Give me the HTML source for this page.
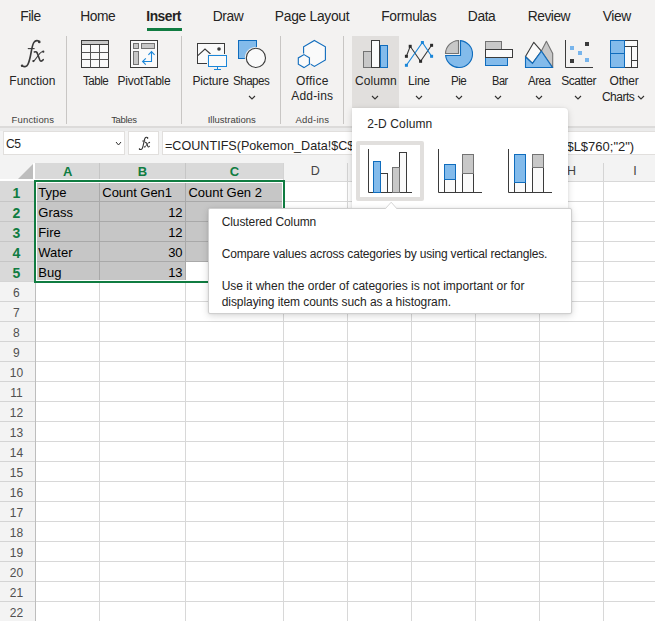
<!DOCTYPE html>
<html><head><meta charset="utf-8"><style>
html,body{margin:0;padding:0;}
body{width:655px;height:621px;overflow:hidden;position:relative;background:#fff;font-family:"Liberation Sans",sans-serif;}
body>div,body>svg{position:absolute;}
.t{white-space:nowrap;}
</style></head><body>
<div style="left:0px;top:0px;width:655px;height:126px;background:#f3f2f1;"></div>
<div style="left:0px;top:126px;width:655px;height:2px;background:#dcdbda;"></div>
<div style="left:0px;top:128px;width:655px;height:3px;background:#ebebeb;"></div>
<div style="left:0px;top:131px;width:655px;height:32px;background:#f3f3f3;"></div>
<div class="t" style="left:20.33px;top:9.52px;font-size:13.8px;line-height:13.8px;color:#252423;letter-spacing:-0.500px;font-family:'Liberation Sans',sans-serif;">File</div>
<div class="t" style="left:80.20px;top:9.52px;font-size:13.8px;line-height:13.8px;color:#252423;letter-spacing:-0.468px;font-family:'Liberation Sans',sans-serif;">Home</div>
<div class="t" style="left:146.36px;top:9.52px;font-size:13.8px;line-height:13.8px;color:#252423;font-weight:bold;letter-spacing:-0.500px;font-family:'Liberation Sans',sans-serif;">Insert</div>
<div class="t" style="left:212.80px;top:9.52px;font-size:13.8px;line-height:13.8px;color:#252423;letter-spacing:-0.398px;font-family:'Liberation Sans',sans-serif;">Draw</div>
<div class="t" style="left:274.80px;top:9.52px;font-size:13.8px;line-height:13.8px;color:#252423;letter-spacing:-0.268px;font-family:'Liberation Sans',sans-serif;">Page Layout</div>
<div class="t" style="left:381.20px;top:9.52px;font-size:13.8px;line-height:13.8px;color:#252423;letter-spacing:-0.300px;font-family:'Liberation Sans',sans-serif;">Formulas</div>
<div class="t" style="left:467.80px;top:9.52px;font-size:13.8px;line-height:13.8px;color:#252423;letter-spacing:-0.381px;font-family:'Liberation Sans',sans-serif;">Data</div>
<div class="t" style="left:527.83px;top:9.52px;font-size:13.8px;line-height:13.8px;color:#252423;letter-spacing:-0.500px;font-family:'Liberation Sans',sans-serif;">Review</div>
<div class="t" style="left:602.80px;top:9.52px;font-size:13.8px;line-height:13.8px;color:#252423;letter-spacing:-0.418px;font-family:'Liberation Sans',sans-serif;">View</div>
<div style="left:147px;top:28px;width:35px;height:3px;background:#107c41;"></div>
<div style="left:66px;top:36px;width:1px;height:88px;background:#c8c6c4;"></div>
<div style="left:181px;top:36px;width:1px;height:88px;background:#c8c6c4;"></div>
<div style="left:280px;top:36px;width:1px;height:88px;background:#c8c6c4;"></div>
<div style="left:343px;top:36px;width:1px;height:88px;background:#c8c6c4;"></div>
<div style="left:352px;top:36px;width:47px;height:72px;background:#e1dfdd;"></div>
<div class="t" style="left:9.30px;top:74.84px;font-size:12px;line-height:12px;color:#252423;letter-spacing:0.025px;font-family:'Liberation Sans',sans-serif;">Function</div>
<div class="t" style="left:82.80px;top:74.84px;font-size:12px;line-height:12px;color:#252423;letter-spacing:-0.500px;font-family:'Liberation Sans',sans-serif;transform:scaleX(0.9667);transform-origin:0 0;">Table</div>
<div class="t" style="left:117.50px;top:74.84px;font-size:12px;line-height:12px;color:#252423;letter-spacing:-0.241px;font-family:'Liberation Sans',sans-serif;">PivotTable</div>
<div class="t" style="left:192.40px;top:74.84px;font-size:12px;line-height:12px;color:#252423;letter-spacing:-0.141px;font-family:'Liberation Sans',sans-serif;">Picture</div>
<div class="t" style="left:233.00px;top:74.84px;font-size:12px;line-height:12px;color:#252423;letter-spacing:-0.500px;font-family:'Liberation Sans',sans-serif;transform:scaleX(0.9634);transform-origin:0 0;">Shapes</div>
<div class="t" style="left:296.00px;top:74.84px;font-size:12px;line-height:12px;color:#252423;letter-spacing:0.255px;font-family:'Liberation Sans',sans-serif;">Office</div>
<div class="t" style="left:291.30px;top:90.34px;font-size:12px;line-height:12px;color:#252423;letter-spacing:0.169px;font-family:'Liberation Sans',sans-serif;">Add-ins</div>
<div class="t" style="left:355.00px;top:74.84px;font-size:12px;line-height:12px;color:#252423;letter-spacing:0.050px;font-family:'Liberation Sans',sans-serif;">Column</div>
<div class="t" style="left:408.00px;top:74.84px;font-size:12px;line-height:12px;color:#252423;letter-spacing:-0.229px;font-family:'Liberation Sans',sans-serif;">Line</div>
<div class="t" style="left:451.20px;top:74.84px;font-size:12px;line-height:12px;color:#252423;letter-spacing:-0.500px;font-family:'Liberation Sans',sans-serif;transform:scaleX(0.9667);transform-origin:0 0;">Pie</div>
<div class="t" style="left:491.50px;top:74.84px;font-size:12px;line-height:12px;color:#252423;letter-spacing:-0.500px;font-family:'Liberation Sans',sans-serif;transform:scaleX(0.9166);transform-origin:0 0;">Bar</div>
<div class="t" style="left:527.60px;top:74.84px;font-size:12px;line-height:12px;color:#252423;letter-spacing:-0.500px;font-family:'Liberation Sans',sans-serif;transform:scaleX(0.9561);transform-origin:0 0;">Area</div>
<div class="t" style="left:561.30px;top:74.84px;font-size:12px;line-height:12px;color:#252423;letter-spacing:-0.486px;font-family:'Liberation Sans',sans-serif;">Scatter</div>
<div class="t" style="left:609.60px;top:74.84px;font-size:12px;line-height:12px;color:#252423;letter-spacing:-0.228px;font-family:'Liberation Sans',sans-serif;">Other</div>
<div class="t" style="left:601.90px;top:90.84px;font-size:12px;line-height:12px;color:#252423;letter-spacing:-0.489px;font-family:'Liberation Sans',sans-serif;">Charts</div>
<div class="t" style="left:11.60px;top:115.26px;font-size:9.5px;line-height:9.5px;color:#424140;letter-spacing:0.152px;font-family:'Liberation Sans',sans-serif;">Functions</div>
<div class="t" style="left:111.20px;top:115.26px;font-size:9.5px;line-height:9.5px;color:#424140;letter-spacing:-0.332px;font-family:'Liberation Sans',sans-serif;">Tables</div>
<div class="t" style="left:207.70px;top:115.26px;font-size:9.5px;line-height:9.5px;color:#424140;font-family:'Liberation Sans',sans-serif;">Illustrations</div>
<div class="t" style="left:295.40px;top:115.26px;font-size:9.5px;line-height:9.5px;color:#424140;letter-spacing:0.232px;font-family:'Liberation Sans',sans-serif;">Add-ins</div>
<svg style="left:248.0px;top:95.0px" width="8" height="5"><polyline points="1,1 4.0,4 7,1" fill="none" stroke="#323130" stroke-width="1.1"/></svg>
<svg style="left:371.2px;top:95.0px" width="8" height="5"><polyline points="1,1 4.0,4 7,1" fill="none" stroke="#323130" stroke-width="1.1"/></svg>
<svg style="left:414.5px;top:95.0px" width="8" height="5"><polyline points="1,1 4.0,4 7,1" fill="none" stroke="#323130" stroke-width="1.1"/></svg>
<svg style="left:454.5px;top:95.0px" width="8" height="5"><polyline points="1,1 4.0,4 7,1" fill="none" stroke="#323130" stroke-width="1.1"/></svg>
<svg style="left:494.4px;top:95.0px" width="8" height="5"><polyline points="1,1 4.0,4 7,1" fill="none" stroke="#323130" stroke-width="1.1"/></svg>
<svg style="left:534.5px;top:95.0px" width="8" height="5"><polyline points="1,1 4.0,4 7,1" fill="none" stroke="#323130" stroke-width="1.1"/></svg>
<svg style="left:574.2px;top:95.0px" width="8" height="5"><polyline points="1,1 4.0,4 7,1" fill="none" stroke="#323130" stroke-width="1.1"/></svg>
<svg style="left:636.5px;top:94.5px" width="8" height="5"><polyline points="1,1 4.0,4 7,1" fill="none" stroke="#323130" stroke-width="1.1"/></svg>
<div style="left:3px;top:131px;width:122px;height:24px;background:#fff;box-sizing:border-box;border:1px solid #e1dfdd;"></div>
<div class="t" style="left:6.00px;top:138.42px;font-size:12.5px;line-height:12.5px;color:#252423;letter-spacing:-0.500px;font-family:'Liberation Sans',sans-serif;transform:scaleX(0.9691);transform-origin:0 0;">C5</div>
<svg style="left:114.9px;top:140.9px" width="7" height="5"><polyline points="1,1 3.5,4 6,1" fill="none" stroke="#323130" stroke-width="1"/></svg>
<div style="left:128px;top:131px;width:31px;height:24px;background:#fff;box-sizing:border-box;border:1px solid #e1dfdd;"></div>
<div style="left:162px;top:131px;width:493px;height:24px;background:#fff;box-sizing:border-box;border:1px solid #e1dfdd;border-right:none;"></div>
<div class="t" style="left:165.00px;top:139.83px;font-size:12.6px;line-height:12.6px;color:#252423;font-family:'Liberation Sans',sans-serif;">=COUNTIFS(Pokemon_Data!$C$2:$C$760;"Grass"</div>
<div class="t" style="left:440.67px;top:139.80px;font-size:13px;line-height:13px;color:#252423;font-family:'Liberation Sans',sans-serif;">Pokemon_Data!$L$2:$L$760;"2")</div>
<div style="left:0px;top:163px;width:655px;height:18px;background:#f3f3f3;"></div>
<svg style="left:0;top:163px" width="35" height="18"><polygon points="33,1 33,16 18,16" fill="#bdbdbd"/></svg>
<div style="left:35px;top:163px;width:248px;height:16px;background:#d9d9d9;"></div>
<div style="left:33px;top:163px;width:2px;height:18px;background:#ffffff;"></div>
<div style="left:0px;top:179px;width:283px;height:1px;background:#ffffff;"></div>
<div style="left:99px;top:163px;width:1px;height:16px;background:#c6c6c6;"></div>
<div style="left:185px;top:163px;width:1px;height:16px;background:#c6c6c6;"></div>
<div style="left:283px;top:163px;width:1px;height:18px;background:#d4d4d4;"></div>
<div style="left:347px;top:163px;width:1px;height:18px;background:#d4d4d4;"></div>
<div style="left:411px;top:163px;width:1px;height:18px;background:#d4d4d4;"></div>
<div style="left:475px;top:163px;width:1px;height:18px;background:#d4d4d4;"></div>
<div style="left:539px;top:163px;width:1px;height:18px;background:#d4d4d4;"></div>
<div style="left:603px;top:163px;width:1px;height:18px;background:#d4d4d4;"></div>
<div style="left:283px;top:181px;width:372px;height:1px;background:#c6c6c6;"></div>
<div style="left:0px;top:181px;width:35px;height:440px;background:#f3f3f3;"></div>
<div style="left:0px;top:180px;width:35px;height:1px;background:#ffffff;"></div>
<div style="left:0px;top:181px;width:34px;height:100px;background:#d9d9d9;"></div>
<div style="left:0px;top:201px;width:34px;height:1px;background:#c6c6c6;"></div>
<div style="left:0px;top:221px;width:34px;height:1px;background:#c6c6c6;"></div>
<div style="left:0px;top:241px;width:34px;height:1px;background:#c6c6c6;"></div>
<div style="left:0px;top:261px;width:34px;height:1px;background:#c6c6c6;"></div>
<div style="left:0px;top:281px;width:35px;height:1px;background:#d4d4d4;"></div>
<div style="left:0px;top:301px;width:35px;height:1px;background:#d4d4d4;"></div>
<div style="left:0px;top:321px;width:35px;height:1px;background:#d4d4d4;"></div>
<div style="left:0px;top:341px;width:35px;height:1px;background:#d4d4d4;"></div>
<div style="left:0px;top:361px;width:35px;height:1px;background:#d4d4d4;"></div>
<div style="left:0px;top:381px;width:35px;height:1px;background:#d4d4d4;"></div>
<div style="left:0px;top:401px;width:35px;height:1px;background:#d4d4d4;"></div>
<div style="left:0px;top:421px;width:35px;height:1px;background:#d4d4d4;"></div>
<div style="left:0px;top:441px;width:35px;height:1px;background:#d4d4d4;"></div>
<div style="left:0px;top:461px;width:35px;height:1px;background:#d4d4d4;"></div>
<div style="left:0px;top:481px;width:35px;height:1px;background:#d4d4d4;"></div>
<div style="left:0px;top:501px;width:35px;height:1px;background:#d4d4d4;"></div>
<div style="left:0px;top:521px;width:35px;height:1px;background:#d4d4d4;"></div>
<div style="left:0px;top:541px;width:35px;height:1px;background:#d4d4d4;"></div>
<div style="left:0px;top:561px;width:35px;height:1px;background:#d4d4d4;"></div>
<div style="left:0px;top:581px;width:35px;height:1px;background:#d4d4d4;"></div>
<div style="left:0px;top:601px;width:35px;height:1px;background:#d4d4d4;"></div>
<div style="left:0px;top:621px;width:35px;height:1px;background:#d4d4d4;"></div>
<div style="left:35px;top:181px;width:1px;height:440px;background:#bdbdbd;"></div>
<div style="left:36px;top:181px;width:619px;height:1px;background:#d8d8d8;"></div>
<div style="left:36px;top:201px;width:619px;height:1px;background:#d8d8d8;"></div>
<div style="left:36px;top:221px;width:619px;height:1px;background:#d8d8d8;"></div>
<div style="left:36px;top:241px;width:619px;height:1px;background:#d8d8d8;"></div>
<div style="left:36px;top:261px;width:619px;height:1px;background:#d8d8d8;"></div>
<div style="left:36px;top:281px;width:619px;height:1px;background:#d8d8d8;"></div>
<div style="left:36px;top:301px;width:619px;height:1px;background:#d8d8d8;"></div>
<div style="left:36px;top:321px;width:619px;height:1px;background:#d8d8d8;"></div>
<div style="left:36px;top:341px;width:619px;height:1px;background:#d8d8d8;"></div>
<div style="left:36px;top:361px;width:619px;height:1px;background:#d8d8d8;"></div>
<div style="left:36px;top:381px;width:619px;height:1px;background:#d8d8d8;"></div>
<div style="left:36px;top:401px;width:619px;height:1px;background:#d8d8d8;"></div>
<div style="left:36px;top:421px;width:619px;height:1px;background:#d8d8d8;"></div>
<div style="left:36px;top:441px;width:619px;height:1px;background:#d8d8d8;"></div>
<div style="left:36px;top:461px;width:619px;height:1px;background:#d8d8d8;"></div>
<div style="left:36px;top:481px;width:619px;height:1px;background:#d8d8d8;"></div>
<div style="left:36px;top:501px;width:619px;height:1px;background:#d8d8d8;"></div>
<div style="left:36px;top:521px;width:619px;height:1px;background:#d8d8d8;"></div>
<div style="left:36px;top:541px;width:619px;height:1px;background:#d8d8d8;"></div>
<div style="left:36px;top:561px;width:619px;height:1px;background:#d8d8d8;"></div>
<div style="left:36px;top:581px;width:619px;height:1px;background:#d8d8d8;"></div>
<div style="left:36px;top:601px;width:619px;height:1px;background:#d8d8d8;"></div>
<div style="left:36px;top:621px;width:619px;height:1px;background:#d8d8d8;"></div>
<div style="left:99px;top:182px;width:1px;height:439px;background:#d8d8d8;"></div>
<div style="left:185px;top:182px;width:1px;height:439px;background:#d8d8d8;"></div>
<div style="left:283px;top:182px;width:1px;height:439px;background:#d8d8d8;"></div>
<div style="left:347px;top:182px;width:1px;height:439px;background:#d8d8d8;"></div>
<div style="left:411px;top:182px;width:1px;height:439px;background:#d8d8d8;"></div>
<div style="left:475px;top:182px;width:1px;height:439px;background:#d8d8d8;"></div>
<div style="left:539px;top:182px;width:1px;height:439px;background:#d8d8d8;"></div>
<div style="left:603px;top:182px;width:1px;height:439px;background:#d8d8d8;"></div>
<div style="left:36px;top:182px;width:247px;height:99px;background:#c6c6c6;"></div>
<div style="left:186px;top:262px;width:97px;height:19px;background:#ffffff;"></div>
<div style="left:36px;top:201px;width:247px;height:1px;background:#a9a9a9;"></div>
<div style="left:36px;top:221px;width:247px;height:1px;background:#a9a9a9;"></div>
<div style="left:36px;top:241px;width:247px;height:1px;background:#a9a9a9;"></div>
<div style="left:36px;top:261px;width:150px;height:1px;background:#a9a9a9;"></div>
<div style="left:186px;top:261px;width:97px;height:1px;background:#a9a9a9;"></div>
<div style="left:99px;top:182px;width:1px;height:99px;background:#a9a9a9;"></div>
<div style="left:185px;top:182px;width:1px;height:99px;background:#a9a9a9;"></div>
<div style="left:34px;top:180px;width:251px;height:103px;background:transparent;box-sizing:border-box;border:2px solid #107c41;"></div>
<div style="left:36px;top:182px;width:247px;height:99px;background:transparent;box-sizing:border-box;border:1px solid #ffffff;"></div>
<div class="t" style="left:62.91px;top:165.00px;font-size:13px;line-height:13px;color:#107c41;font-weight:bold;font-family:'Liberation Sans',sans-serif;">A</div>
<div class="t" style="left:137.71px;top:165.00px;font-size:13px;line-height:13px;color:#107c41;font-weight:bold;font-family:'Liberation Sans',sans-serif;">B</div>
<div class="t" style="left:229.81px;top:165.00px;font-size:13px;line-height:13px;color:#107c41;font-weight:bold;font-family:'Liberation Sans',sans-serif;">C</div>
<div class="t" style="left:310.69px;top:165.42px;font-size:12.5px;line-height:12.5px;color:#444444;font-family:'Liberation Sans',sans-serif;">D</div>
<div class="t" style="left:374.83px;top:165.42px;font-size:12.5px;line-height:12.5px;color:#444444;font-family:'Liberation Sans',sans-serif;">E</div>
<div class="t" style="left:439.18px;top:165.42px;font-size:12.5px;line-height:12.5px;color:#444444;font-family:'Liberation Sans',sans-serif;">F</div>
<div class="t" style="left:502.14px;top:165.42px;font-size:12.5px;line-height:12.5px;color:#444444;font-family:'Liberation Sans',sans-serif;">G</div>
<div class="t" style="left:566.99px;top:165.42px;font-size:12.5px;line-height:12.5px;color:#444444;font-family:'Liberation Sans',sans-serif;">H</div>
<div class="t" style="left:633.26px;top:165.42px;font-size:12.5px;line-height:12.5px;color:#444444;font-family:'Liberation Sans',sans-serif;">I</div>
<div class="t" style="left:12.41px;top:185.65px;font-size:14px;line-height:14px;color:#107c41;font-weight:bold;font-family:'Liberation Sans',sans-serif;">1</div>
<div class="t" style="left:12.41px;top:205.65px;font-size:14px;line-height:14px;color:#107c41;font-weight:bold;font-family:'Liberation Sans',sans-serif;">2</div>
<div class="t" style="left:12.41px;top:225.65px;font-size:14px;line-height:14px;color:#107c41;font-weight:bold;font-family:'Liberation Sans',sans-serif;">3</div>
<div class="t" style="left:12.41px;top:245.65px;font-size:14px;line-height:14px;color:#107c41;font-weight:bold;font-family:'Liberation Sans',sans-serif;">4</div>
<div class="t" style="left:12.41px;top:265.65px;font-size:14px;line-height:14px;color:#107c41;font-weight:bold;font-family:'Liberation Sans',sans-serif;">5</div>
<div class="t" style="left:13.06px;top:286.84px;font-size:12px;line-height:12px;color:#505050;font-family:'Liberation Sans',sans-serif;">6</div>
<div class="t" style="left:13.06px;top:306.84px;font-size:12px;line-height:12px;color:#505050;font-family:'Liberation Sans',sans-serif;">7</div>
<div class="t" style="left:13.06px;top:326.84px;font-size:12px;line-height:12px;color:#505050;font-family:'Liberation Sans',sans-serif;">8</div>
<div class="t" style="left:13.06px;top:346.84px;font-size:12px;line-height:12px;color:#505050;font-family:'Liberation Sans',sans-serif;">9</div>
<div class="t" style="left:9.73px;top:366.84px;font-size:12px;line-height:12px;color:#505050;font-family:'Liberation Sans',sans-serif;">10</div>
<div class="t" style="left:10.17px;top:386.84px;font-size:12px;line-height:12px;color:#505050;font-family:'Liberation Sans',sans-serif;">11</div>
<div class="t" style="left:9.73px;top:406.84px;font-size:12px;line-height:12px;color:#505050;font-family:'Liberation Sans',sans-serif;">12</div>
<div class="t" style="left:9.73px;top:426.84px;font-size:12px;line-height:12px;color:#505050;font-family:'Liberation Sans',sans-serif;">13</div>
<div class="t" style="left:9.73px;top:446.84px;font-size:12px;line-height:12px;color:#505050;font-family:'Liberation Sans',sans-serif;">14</div>
<div class="t" style="left:9.73px;top:466.84px;font-size:12px;line-height:12px;color:#505050;font-family:'Liberation Sans',sans-serif;">15</div>
<div class="t" style="left:9.73px;top:486.84px;font-size:12px;line-height:12px;color:#505050;font-family:'Liberation Sans',sans-serif;">16</div>
<div class="t" style="left:9.73px;top:506.84px;font-size:12px;line-height:12px;color:#505050;font-family:'Liberation Sans',sans-serif;">17</div>
<div class="t" style="left:9.73px;top:526.84px;font-size:12px;line-height:12px;color:#505050;font-family:'Liberation Sans',sans-serif;">18</div>
<div class="t" style="left:9.73px;top:546.84px;font-size:12px;line-height:12px;color:#505050;font-family:'Liberation Sans',sans-serif;">19</div>
<div class="t" style="left:9.73px;top:566.84px;font-size:12px;line-height:12px;color:#505050;font-family:'Liberation Sans',sans-serif;">20</div>
<div class="t" style="left:9.73px;top:586.84px;font-size:12px;line-height:12px;color:#505050;font-family:'Liberation Sans',sans-serif;">21</div>
<div class="t" style="left:9.73px;top:606.84px;font-size:12px;line-height:12px;color:#505050;font-family:'Liberation Sans',sans-serif;">22</div>
<div class="t" style="left:38.30px;top:186.00px;font-size:13px;line-height:13px;color:#000000;font-family:'Liberation Sans',sans-serif;">Type</div>
<div class="t" style="left:102.30px;top:186.00px;font-size:13px;line-height:13px;color:#000000;letter-spacing:-0.045px;font-family:'Liberation Sans',sans-serif;">Count Gen1</div>
<div class="t" style="left:188.40px;top:186.00px;font-size:13px;line-height:13px;color:#000000;letter-spacing:-0.022px;font-family:'Liberation Sans',sans-serif;">Count Gen 2</div>
<div class="t" style="left:38.30px;top:206.00px;font-size:13px;line-height:13px;color:#000000;font-family:'Liberation Sans',sans-serif;">Grass</div>
<div class="t" style="left:168.14px;top:206.00px;font-size:13px;line-height:13px;color:#000000;font-family:'Liberation Sans',sans-serif;">12</div>
<div class="t" style="left:38.30px;top:226.00px;font-size:13px;line-height:13px;color:#000000;font-family:'Liberation Sans',sans-serif;">Fire</div>
<div class="t" style="left:168.14px;top:226.00px;font-size:13px;line-height:13px;color:#000000;font-family:'Liberation Sans',sans-serif;">12</div>
<div class="t" style="left:38.30px;top:246.00px;font-size:13px;line-height:13px;color:#000000;font-family:'Liberation Sans',sans-serif;">Water</div>
<div class="t" style="left:168.14px;top:246.00px;font-size:13px;line-height:13px;color:#000000;font-family:'Liberation Sans',sans-serif;">30</div>
<div class="t" style="left:38.30px;top:266.00px;font-size:13px;line-height:13px;color:#000000;font-family:'Liberation Sans',sans-serif;">Bug</div>
<div class="t" style="left:168.14px;top:266.00px;font-size:13px;line-height:13px;color:#000000;font-family:'Liberation Sans',sans-serif;">13</div>
<svg style="left:0;top:0" width="655" height="130"><rect x="81.5" y="40.5" width="27" height="27" fill="#fafafa" stroke="#3b3b3b"/><rect x="82" y="41" width="26" height="3" fill="#c8c8c8"/><path d="M81.5 44.5H108.5M90.5 44.5V67.5M99.5 44.5V67.5M81.5 52.5H108.5M81.5 59.5H108.5" stroke="#555" fill="none"/><path d="M81.5 44.5H108.5" stroke="#3b3b3b"/><rect x="130.5" y="40.5" width="27" height="27" fill="#fafafa" stroke="#3b3b3b"/><rect x="133.5" y="43.5" width="5" height="5" fill="#c8c8c8" stroke="#737373"/><rect x="141.5" y="43.5" width="13" height="5" fill="#c8c8c8" stroke="#737373"/><rect x="133.5" y="51.5" width="5" height="13" fill="#c8c8c8" stroke="#737373"/><path d="M151.5 52V61.5H142.8M148.4 54.8L151.5 51.6L154.6 54.8M145.8 58.3L142.6 61.5L145.8 64.6" stroke="#1a86d9" fill="none" stroke-width="1.1"/><rect x="197.5" y="43.5" width="27" height="20" fill="#fafafa" stroke="#3b3b3b"/><path d="M197.8 55.7L205 49L210.5 54" stroke="#3b3b3b" fill="none" stroke-width="1.1"/><circle cx="219" cy="49" r="1.8" fill="#3b3b3b"/><rect x="207" y="54" width="21" height="14" fill="#f3f2f1"/><rect x="208.5" y="55.5" width="18" height="11" fill="#fafafa" stroke="#1a86d9"/><path d="M217.5 66.5V69.5M214 69.5H221" stroke="#1a86d9" fill="none"/><rect x="238.5" y="40.5" width="18" height="18" fill="#83bbeb" stroke="#0f6cbd"/><circle cx="255.9" cy="57.9" r="11" fill="#f3f2f1"/><circle cx="255.9" cy="57.9" r="9.6" fill="#fafafa" stroke="#3b3b3b" stroke-width="1.1"/><path d="M314.4 40.5L325.4 46.7V59.9L314.4 66.4L303.6 59.9V46.7Z" fill="#fafafa" stroke="#0f6cbd" stroke-width="1.1"/><path d="M304 53.2L310.6 57.1V65L304 68.9L297.1 65V57.1Z" fill="#f3f2f1"/><path d="M304 54.6L309.4 57.9V64.3L304 67.6L298.3 64.3V57.9Z" fill="#fafafa" stroke="#0f6cbd" stroke-width="1.1"/><rect x="363.5" y="51.5" width="8" height="16" fill="#c8c8c8" stroke="#737373"/><rect x="380.5" y="45.5" width="7" height="22" fill="#83bbeb" stroke="#0f6cbd"/><rect x="371.5" y="40.5" width="8" height="27" fill="#fafafa" stroke="#3b3b3b"/><polyline points="406.4,56.3 410.2,46.3 420.6,61.3 431.6,45.3" fill="none" stroke="#3b3b3b" stroke-width="1.1"/><polyline points="406.4,65.3 422.4,42.5 431.6,56.3" fill="none" stroke="#1a86d9" stroke-width="1.1"/><rect x="404.9" y="54.8" width="3" height="3" fill="#2b2b2b"/><rect x="408.7" y="44.8" width="3" height="3" fill="#2b2b2b"/><rect x="419.1" y="59.8" width="3" height="3" fill="#2b2b2b"/><rect x="430.1" y="43.8" width="3" height="3" fill="#2b2b2b"/><rect x="404.9" y="63.8" width="3" height="3" fill="#1a86d9"/><rect x="420.9" y="41.0" width="3" height="3" fill="#1a86d9"/><rect x="430.1" y="54.8" width="3" height="3" fill="#1a86d9"/><path d="M460.5 55.5V40.6A13.5 13.5 0 1 1 445.6 55.5Z" fill="#83bbeb" stroke="#0f6cbd" stroke-width="1.1"/><path d="M458.5 53.5H445.5A13.5 13.5 0 0 1 458.5 40.5Z" fill="#c8c8c8" stroke="#737373" stroke-width="1.1"/><rect x="485.5" y="41.5" width="16" height="8" fill="#c8c8c8" stroke="#737373"/><rect x="485.5" y="57.5" width="22" height="8" fill="#83bbeb" stroke="#0f6cbd"/><rect x="485.5" y="49.5" width="27" height="8" fill="#fafafa" stroke="#3b3b3b"/><path d="M541.4 51.1L546.4 41.2L552.7 53.5V67.5Z" fill="#c8c8c8" stroke="#737373" stroke-width="1.1" stroke-linejoin="round"/><path d="M525.5 56.5L533.8 42.3L541.4 51.1L532.5 63.4Z" fill="#fafafa" stroke="#3b3b3b" stroke-width="1.1" stroke-linejoin="round"/><path d="M525.5 57L532.5 63.4L541.4 51.1L552.4 67.5H525.5Z" fill="#83bbeb" stroke="#0f6cbd" stroke-width="1.1"/><path d="M565.5 40V67.5H593" fill="none" stroke="#3b3b3b"/><rect x="585" y="42" width="4" height="4" fill="#3b3b3b"/><rect x="570" y="46" width="4" height="4" fill="#78b5ec"/><rect x="578" y="51" width="4" height="4" fill="#78b5ec"/><rect x="570" y="59" width="4" height="4" fill="#3b3b3b"/><rect x="585" y="58" width="4" height="4" fill="#78b5ec"/><rect x="624.5" y="40.5" width="13" height="27" fill="#fafafa" stroke="#3b3b3b"/><path d="M624.5 46.5H637.5M631.5 46.5V67.5M631.5 60.5H637.5" fill="none" stroke="#3b3b3b"/><rect x="610.5" y="40.5" width="14" height="27" fill="#83bbeb" stroke="#0f6cbd"/><path d="M610.5 53.5H624.5" fill="none" stroke="#0f6cbd"/></svg>
<svg style="left:0;top:0" width="200" height="160"><g transform="translate(21 40) scale(1)"><path d="M18.2 1.9C17.5 0.2 14.5 0.1 12.9 2.4C11.6 4.3 10.9 8 10.1 12.5C9.2 17.5 8.4 21.5 6.9 24.4C5.7 26.6 3.6 27.4 1.2 25.9" fill="none" stroke="#3a3a3a" stroke-width="1.6" stroke-linecap="round"/><path d="M6.8 8.6H13.6" fill="none" stroke="#3a3a3a" stroke-width="1.1"/><path d="M13.3 12C15 11.2 16 12 16.8 14.5L18.8 20C19.4 21.5 20.6 21.6 22.2 19.7" fill="none" stroke="#3a3a3a" stroke-width="1.6" stroke-linecap="round"/><path d="M22.4 11.6C21 11.2 19.6 12.4 17.6 15L14.6 19C13.9 20 13.1 21 12.3 21.1" fill="none" stroke="#3a3a3a" stroke-width="1.1" stroke-linecap="round"/><circle cx="18.3" cy="1.9" r="1.3" fill="#3a3a3a"/><circle cx="1.1" cy="25.7" r="1.3" fill="#3a3a3a"/><circle cx="22.3" cy="11.7" r="1.105" fill="#3a3a3a"/><circle cx="12.4" cy="21.1" r="1.105" fill="#3a3a3a"/></g></svg>
<svg style="left:0;top:0" width="200" height="160"><g transform="translate(139 137) scale(0.47)"><path d="M18.2 1.9C17.5 0.2 14.5 0.1 12.9 2.4C11.6 4.3 10.9 8 10.1 12.5C9.2 17.5 8.4 21.5 6.9 24.4C5.7 26.6 3.6 27.4 1.2 25.9" fill="none" stroke="#333" stroke-width="2.3" stroke-linecap="round"/><path d="M6.8 8.6H13.6" fill="none" stroke="#333" stroke-width="1.9"/><path d="M13.3 12C15 11.2 16 12 16.8 14.5L18.8 20C19.4 21.5 20.6 21.6 22.2 19.7" fill="none" stroke="#333" stroke-width="2.3" stroke-linecap="round"/><path d="M22.4 11.6C21 11.2 19.6 12.4 17.6 15L14.6 19C13.9 20 13.1 21 12.3 21.1" fill="none" stroke="#333" stroke-width="1.9" stroke-linecap="round"/><circle cx="18.3" cy="1.9" r="1.6" fill="#333"/><circle cx="1.1" cy="25.7" r="1.6" fill="#333"/><circle cx="22.3" cy="11.7" r="1.36" fill="#333"/><circle cx="12.4" cy="21.1" r="1.36" fill="#333"/></g></svg>
<div style="left:352px;top:108px;width:216px;height:101px;background:#fff;border-radius:0 4px 0 0;box-shadow:0 2px 7px rgba(0,0,0,0.15),0 0 2px rgba(0,0,0,0.08);"></div>
<div class="t" style="left:367.20px;top:118.04px;font-size:12px;line-height:12px;color:#252423;letter-spacing:0.120px;font-family:'Liberation Sans',sans-serif;">2-D Column</div>
<div style="left:356px;top:141px;width:68px;height:60px;box-sizing:border-box;border:4px solid #e1dfdd;border-radius:2px;"></div>
<svg style="left:0;top:0" width="655" height="210"><path d="M368.5 149V192.5H412" fill="none" stroke="#3b3b3b"/><path d="M438.5 149V192.5H482" fill="none" stroke="#3b3b3b"/><path d="M508.5 149V192.5H552" fill="none" stroke="#3b3b3b"/><rect x="380.5" y="173.5" width="7" height="19" fill="#fafafa" stroke="#3b3b3b"/><rect x="373.5" y="161.5" width="7" height="31" fill="#83bbeb" stroke="#0f6cbd"/><rect x="399.5" y="152.5" width="7" height="40" fill="#fafafa" stroke="#3b3b3b"/><rect x="392.5" y="167.5" width="7" height="25" fill="#c8c8c8" stroke="#737373"/><rect x="444.5" y="179.5" width="11" height="13" fill="#fafafa" stroke="#3b3b3b"/><rect x="444.5" y="164.5" width="11" height="15" fill="#83bbeb" stroke="#0f6cbd"/><rect x="462.5" y="173.5" width="11" height="19" fill="#fafafa" stroke="#3b3b3b"/><rect x="462.5" y="154.5" width="11" height="19" fill="#c8c8c8" stroke="#737373"/><rect x="514.5" y="182.5" width="11" height="10" fill="#fafafa" stroke="#3b3b3b"/><rect x="514.5" y="154.5" width="11" height="28" fill="#83bbeb" stroke="#0f6cbd"/><rect x="532.5" y="167.5" width="11" height="25" fill="#fafafa" stroke="#3b3b3b"/><rect x="532.5" y="154.5" width="11" height="13" fill="#c8c8c8" stroke="#737373"/></svg>
<div style="left:208px;top:208px;width:364px;height:106px;box-sizing:border-box;background:#fff;border:1px solid #cfcfcf;border-radius:2px;box-shadow:0 2px 7px rgba(0,0,0,0.15),0 0 2px rgba(0,0,0,0.08);"></div>
<svg style="left:380px;top:200px" width="24" height="12"><path d="M4.7 9.5L11.2 2.2L17.5 9.5" fill="#fff" stroke="#d6d6d6"/><rect x="0" y="9" width="24" height="3" fill="#fff"/></svg>
<div class="t" style="left:221.70px;top:216.04px;font-size:12px;line-height:12px;color:#252423;letter-spacing:-0.096px;font-family:'Liberation Sans',sans-serif;">Clustered Column</div>
<div class="t" style="left:221.70px;top:247.84px;font-size:12px;line-height:12px;color:#252423;letter-spacing:-0.171px;font-family:'Liberation Sans',sans-serif;">Compare values across categories by using vertical rectangles.</div>
<div class="t" style="left:221.70px;top:279.84px;font-size:12px;line-height:12px;color:#252423;font-family:'Liberation Sans',sans-serif;">Use it when the order of categories is not important or for</div>
<div class="t" style="left:221.70px;top:295.64px;font-size:12px;line-height:12px;color:#252423;letter-spacing:-0.067px;font-family:'Liberation Sans',sans-serif;">displaying item counts such as a histogram.</div>
</body></html>
